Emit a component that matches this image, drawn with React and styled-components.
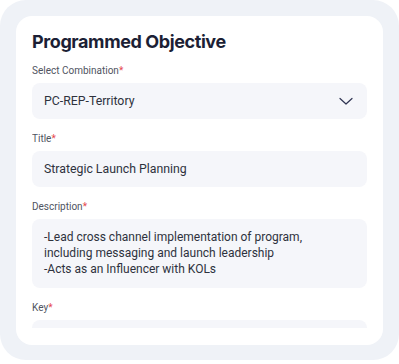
import React from "react";
import styled, { createGlobalStyle } from "styled-components";

const GlobalStyle = createGlobalStyle`
  * {
    box-sizing: border-box;
  }
  body {
    margin: 0;
    background: #ffffff;
    font-family: Roboto, "Noto Sans", sans-serif;
  }
`;

const Frame = styled.div`
  width: 399px;
  height: 360px;
  background: #eff2f7;
  border-radius: 26px;
  padding: 16px;
`;

const Card = styled.div`
  height: 329px;
  background: #ffffff;
  border-radius: 16px;
  padding: 14px 16px 17px 16px;
  display: flex;
  flex-direction: column;
`;

const Body = styled.div`
  flex: 1;
  overflow: hidden;
  display: flex;
  flex-direction: column;
`;

const Heading = styled.h2`
  margin: 0 0 10px 0;
  font-family: Inter, Roboto, sans-serif;
  font-size: 18px;
  line-height: 24px;
  font-weight: 700;
  color: #1c1f35;
  letter-spacing: -0.4px;
`;

const Group = styled.div`
  display: flex;
  flex-direction: column;
  margin-bottom: 13px;
`;

const Label = styled.label`
  font-size: 10px;
  line-height: 14px;
  color: #4f5461;
  margin-bottom: 5px;

  span {
    color: #e5484d;
  }
`;

const Field = styled.div`
  background: #f5f6fa;
  border-radius: 8px;
  min-height: 36px;
  padding: ${(p) => (p.$multi ? "10px 12px 11px 12px" : "0 14px 0 12px")};
  display: flex;
  align-items: ${(p) => (p.$multi ? "flex-start" : "center")};
  justify-content: space-between;
  font-size: ${(p) => (p.$multi ? "12px" : "12.3px")};
  line-height: 16px;
  color: #2e323d;
  white-space: pre-line;
  flex-shrink: 0;
`;

const Chevron = () => (
  <svg width="14" height="8" viewBox="0 0 14 8" fill="none">
    <path
      d="M1 1.5l6 5.5 6-5.5"
      stroke="#2f3452"
      strokeWidth="1.2"
      strokeLinecap="round"
      strokeLinejoin="round"
    />
  </svg>
);

const fields = [
  { label: "Select Combination", value: "PC-REP-Territory", select: true },
  { label: "Title", value: "Strategic Launch Planning" },
  {
    label: "Description",
    value:
      "-Lead cross channel implementation of program,\nincluding messaging and launch leadership\n-Acts as an Influencer with KOLs",
    multi: true,
  },
  { label: "Key", value: "" },
];

export default function App() {
  return (
    <>
      <GlobalStyle />
      <Frame>
        <Card>
          <Body>
            <Heading>Programmed Objective</Heading>
            {fields.map((f) => (
              <Group key={f.label}>
                <Label>
                  {f.label}
                  <span>*</span>
                </Label>
                <Field $multi={f.multi}>
                  {f.value}
                  {f.select && <Chevron />}
                </Field>
              </Group>
            ))}
          </Body>
        </Card>
      </Frame>
    </>
  );
}
